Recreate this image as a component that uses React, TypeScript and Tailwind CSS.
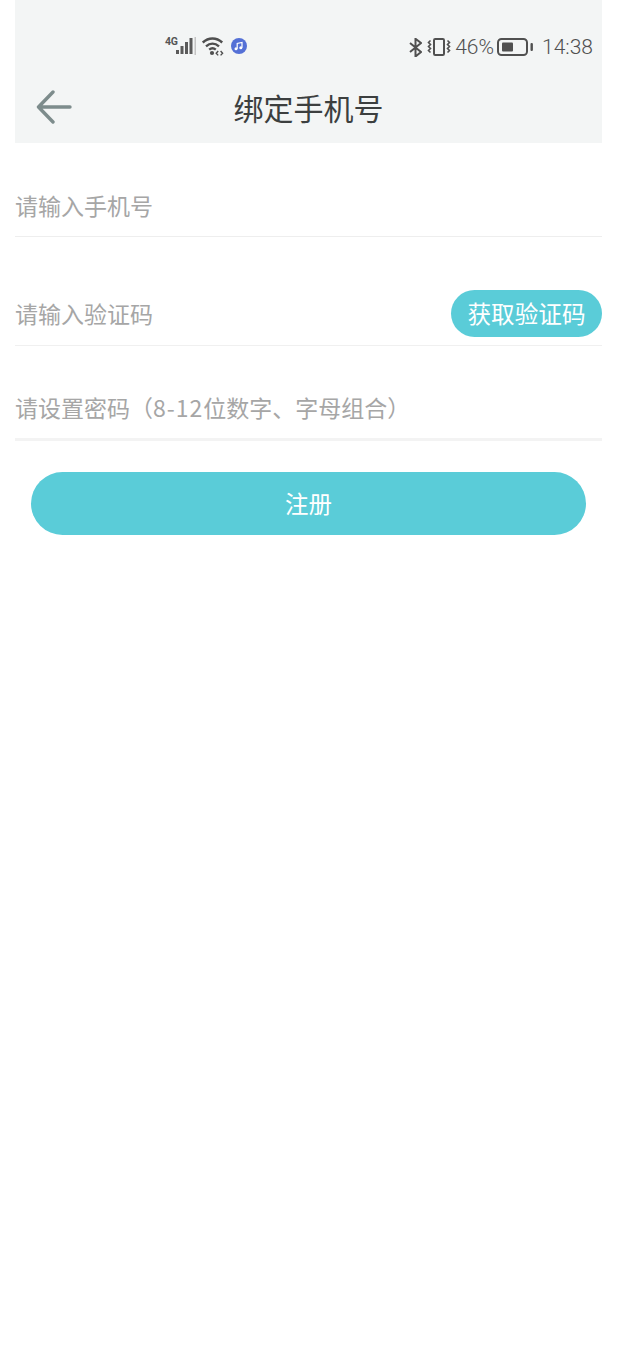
function Signal() {
    return (
        <div className="relative h-[20px] w-[32px]">
            <span className="absolute left-0 top-0 font-['Roboto',sans-serif] text-[10.5px] leading-[11px] font-bold tracking-[-0.3px] text-[#555]">4G</span>
            <svg viewBox="0 0 32 20" className="absolute inset-0 h-[20px] w-[32px]" fill="#5a5a5a">
                <rect x="11" y="14" width="3" height="4" />
                <rect x="15.5" y="10" width="3" height="8" />
                <rect x="20" y="6" width="3" height="12" />
                <rect x="24.5" y="2" width="3" height="16" />
                <rect x="29.5" y="1" width="1.5" height="18" fill="#c4c4c4" />
            </svg>
        </div>
    );
}

function Wifi() {
    return (
        <svg viewBox="0 0 22 20" className="h-[20px] w-[22px]" fill="none" stroke="#4f4f4f" strokeWidth="2.4">
            <path d="M0.8 6.5C6.5 1.2 14.5 1.2 20.2 6.5" />
            <path d="M4 10.3C8 6.8 13 6.8 17 10.3" />
            <path d="M7.2 13.6C9.2 12 11.8 12 13.8 13.6" />
            <circle cx="10" cy="17" r="2.1" fill="#4f4f4f" stroke="none" />
            <path d="M16.2 15l-2 2.2 2 2.2M18.6 15l2 2.2-2 2.2" strokeWidth="1.4" />
        </svg>
    );
}

function Music() {
    return (
        <svg viewBox="0 0 16 16" className="h-[16px] w-[16px]">
            <circle cx="8" cy="8" r="8" fill="#5470d6" />
            <path d="M6.2 10.8V5.4l4.8-1V9.8" fill="none" stroke="#fff" strokeWidth="1.2" />
            <circle cx="5" cy="10.8" r="1.5" fill="#fff" />
            <circle cx="9.8" cy="9.8" r="1.5" fill="#fff" />
        </svg>
    );
}

function Bluetooth() {
    return (
        <svg viewBox="0 0 13 19" className="h-[19px] w-[13px]" fill="none" stroke="#505050" strokeWidth="2">
            <path d="M1 5l11 9-5.5 4.5V.8L12 5 1 14" />
        </svg>
    );
}

function Vibrate() {
    return (
        <svg viewBox="0 0 24 18" className="h-[18px] w-[24px]" fill="none" stroke="#505050">
            <rect x="7" y="1" width="10" height="16" rx="1.2" strokeWidth="2" />
            <path d="M3.5 2.5L1.5 4.5l2 2-2 2 2 2-2 2 2 2" strokeWidth="1.6" />
            <path d="M20.5 2.5l2 2-2 2 2 2-2 2 2 2-2 2" strokeWidth="1.6" />
        </svg>
    );
}

function Battery() {
    return (
        <svg viewBox="0 0 36 18" className="h-[18px] w-[36px]">
            <rect x="1" y="1" width="29" height="16" rx="3.5" fill="none" stroke="#505050" strokeWidth="2" />
            <rect x="5" y="4.5" width="11" height="9" rx="1" fill="#505050" />
            <rect x="33.5" y="5" width="2.4" height="8" rx="1" fill="#505050" />
        </svg>
    );
}

function BackArrow() {
    return (
        <svg viewBox="0 0 36 34" className="h-[34px] w-[36px]" fill="none" stroke="#7d8c8c" strokeWidth="3.4" strokeLinecap="round" strokeLinejoin="round">
            <path d="M34 17H3M17 2L2.5 17 17 32" />
        </svg>
    );
}

export default function App() {
    return (
        <div className="min-h-[1372px] bg-white px-[15px] font-['Noto_Sans_CJK_SC','Noto_Sans',sans-serif]">
            <header className="bg-[#f3f5f5]">
                <div className="flex h-[72px] items-end justify-between pb-[16px] pl-[150px] pr-[9px]">
                    <div className="flex items-center">
                        <Signal />
                        <span className="ml-[5px]"><Wifi /></span>
                        <span className="ml-[7px]"><Music /></span>
                    </div>
                    <div className="-mb-[2px] flex items-center font-['Roboto',sans-serif] text-[21px] font-light leading-[22px] text-[#505050]">
                        <Bluetooth />
                        <span className="ml-[5px]"><Vibrate /></span>
                        <span className="ml-[4px]">46%</span>
                        <span className="ml-[3px]"><Battery /></span>
                        <span className="ml-[9px]">14:38</span>
                    </div>
                </div>
                <div className="relative flex h-[71px] items-center justify-center pb-[2px]">
                    <span className="absolute left-[21px] top-[18px]"><BackArrow /></span>
                    <h1 className="text-[30px] font-normal leading-none text-[#3c3f3f]">绑定手机号</h1>
                </div>
            </header>

            <div className="flex h-[94px] items-center border-b border-[#eeeeee] pt-[31px] text-[23px] text-[#a6a6a6]">
                请输入手机号
            </div>

            <div className="flex h-[109px] items-end justify-between border-b border-[#f0f0f0] pb-[8px] text-[23px] text-[#a6a6a6]">
                <span className="pb-[6px] leading-[36px]">请输入验证码</span>
                <button className="flex h-[47px] w-[151px] items-center justify-center rounded-full bg-[#5accd8] text-[23.6px] text-white">
                    获取验证码
                </button>
            </div>

            <div className="flex h-[95px] items-center border-b-[3px] border-[#f3f3f3] pt-[31px] text-[23px] text-[#a6a6a6]">
                请设置密码（<span className="tracking-[1px]">8-12</span>位数字、字母组合）
            </div>

            <div className="px-[16px] pt-[31px]">
                <button className="flex h-[63px] w-full items-center justify-center rounded-full bg-[#5accd8] text-[23.5px] text-white">
                    注册
                </button>
            </div>
        </div>
    );
}
